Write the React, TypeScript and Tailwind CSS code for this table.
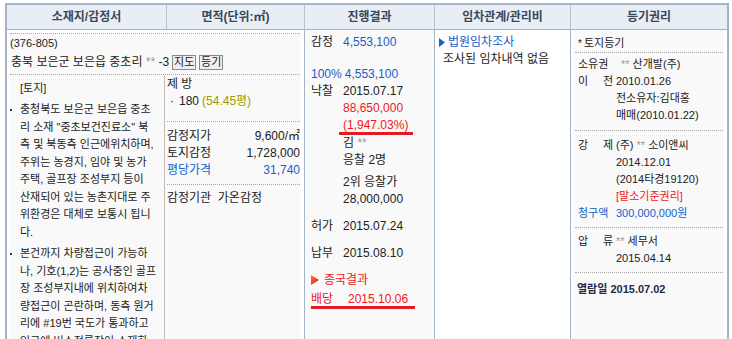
const font = "font-['Liberation_Sans','Noto_Sans_CJK_KR',sans-serif]";
const narrow = "font-['Liberation_Sans_Narrow','Liberation_Sans','Noto_Sans_CJK_KR',sans-serif]";

const BLUE = "text-[#1560c9]";
const RED = "text-[#f01818]";

function Stars() {
  return <span className="text-[#9a9a9a]">**</span>;
}

function BlueArrow() {
  return (
    <svg width="6" height="9" viewBox="0 0 6 9" className="shrink-0">
      <path d="M0 0 L6 4.5 L0 9 Z" fill="#1660c8" />
    </svg>
  );
}

function RedArrow() {
  return (
    <svg width="8" height="10" viewBox="0 0 8 10" className="shrink-0">
      <defs>
        <linearGradient id="redArrow" x1="0" y1="0" x2="1" y2="1">
          <stop offset="0" stopColor="#ff7a3c" />
          <stop offset="1" stopColor="#d4160c" />
        </linearGradient>
      </defs>
      <path d="M0 0 L8 5 L0 10 Z" fill="url(#redArrow)" />
    </svg>
  );
}

function SmallButton({ label }: { label: string }) {
  return (
    <span className="inline-flex h-[15px] w-[24px] items-center justify-center border border-[#8a8a8a] bg-[#efefef] text-[11px] leading-none text-[#222]">
      {label}
    </span>
  );
}

function Bullet({ lines }: { lines: string[] }) {
  return (
    <div className="flex">
      <div className="w-[10px] shrink-0 pt-[8px]">
        <div className="h-[2px] w-[2px] bg-[#333]" />
      </div>
      <div>
        {lines.map((line) => (
          <div key={line} className="whitespace-nowrap">
            {line}
          </div>
        ))}
      </div>
    </div>
  );
}

function Row3({ label, children, className = "" }: { label?: string; children: React.ReactNode; className?: string }) {
  return (
    <div className={`flex whitespace-nowrap ${className}`}>
      <span className="w-[32px] shrink-0">{label}</span>
      <span>{children}</span>
    </div>
  );
}

function Row5({ label, children }: { label?: React.ReactNode; children: React.ReactNode }) {
  return (
    <div className="flex whitespace-nowrap">
      <span className="w-[38px] shrink-0">{label}</span>
      <span>{children}</span>
    </div>
  );
}

function Spread({ a, b }: { a: string; b: string }) {
  return (
    <span className="flex w-[35px] justify-between">
      <span>{a}</span>
      <span>{b}</span>
    </span>
  );
}

export default function App() {
  return (
    <div className={`h-[339px] w-[732px] overflow-hidden bg-white pl-[5px] pt-[3px] text-[12px] text-[#222] ${font}`}>
      <div className="flex h-[340px] w-[724px] flex-col border-x-2 border-t-2 border-[#a5b4c6]">
        <div className="flex h-[25px] shrink-0 border-b border-[#a5b4c6] bg-[#e8eef5] text-[12px] font-bold text-[#3b4759]">
          <div className="flex w-[159px] items-center justify-center">소재지/감정서</div>
          <div className="flex w-[138px] items-center justify-center border-l border-[#b5c3d3]">면적(단위:㎡)</div>
          <div className="flex w-[130px] items-center justify-center border-l border-[#b5c3d3]">진행결과</div>
          <div className="flex w-[136px] items-center justify-center border-l border-[#b5c3d3]">임차관계/관리비</div>
          <div className="flex w-[157px] items-center justify-center border-l border-[#b5c3d3]">등기권리</div>
        </div>

        <div className="flex flex-1 leading-[17px]">
          {/* 소재지 + 면적 */}
          <div className="w-[297px] pl-[3px] pr-[4px] pt-[3px]">
            <div className="h-full border-t border-dotted border-[#a8a8a8] bg-[#f9f9f9]">
              <div className="border-b border-dotted border-[#a8a8a8] pb-[3px] pt-[1px]">
                <div className="text-[11px]">(376-805)</div>
                <div className="mt-[2px] flex items-center gap-[3px] whitespace-nowrap pl-[1px]">
                  <span>
                    충북 보은군 보은읍 중초리 <Stars /> -3
                  </span>
                  <SmallButton label="지도" />
                  <SmallButton label="등기" />
                </div>
              </div>
              <div className="flex h-full">
                <div className="w-[155px] shrink-0 border-r border-[#cbbcb4] pt-[5px] text-[11px] leading-[17.5px]">
                  <div className="pl-[10px]">[토지]</div>
                  <div className="mt-[3.5px]">
                    <Bullet
                      lines={[
                        "충청북도 보은군 보은읍 중초",
                        "리 소재 \"중초보건진료소\" 북",
                        "측 및 북동측 인근에위치하며,",
                        "주위는 농경지, 임야 및 농가",
                        "주택, 골프장 조성부지 등이",
                        "산재되어 있는 농촌지대로 주",
                        "위환경은 대체로 보통시 됩니",
                        "다.",
                      ]}
                    />
                  </div>
                  <div className="mt-[4px]">
                    <Bullet
                      lines={[
                        "본건까지 차량접근이 가능하",
                        "나, 기호(1,2)는 공사중인 골프",
                        "장 조성부지내에 위치하여차",
                        "량접근이 곤란하며, 동측 원거",
                        "리에 #19번 국도가 통과하고",
                        "인근에 버스정류장이 소재하",
                      ]}
                    />
                  </div>
                </div>
                <div className="flex-1 pl-[2px]">
                  <div className="border-b border-dotted border-[#a8a8a8] pb-[11.5px] pt-[0.5px]">
                    <div>제 방</div>
                    <div className="flex items-center whitespace-nowrap">
                      <span className="w-[12px] pl-[3px]">·</span>
                      <span>180 </span>
                      <span className="ml-[3px] text-[#a09a00]">(54.45평)</span>
                    </div>
                  </div>
                  <div className="border-b border-dotted border-[#a8a8a8] pb-[5.5px] pt-[5.5px]">
                    <div className="flex justify-between">
                      <span>감정지가</span>
                      <span>9,600/㎡</span>
                    </div>
                    <div className="flex justify-between">
                      <span>토지감정</span>
                      <span>1,728,000</span>
                    </div>
                    <div className={`flex justify-between ${BLUE}`}>
                      <span>평당가격</span>
                      <span>31,740</span>
                    </div>
                  </div>
                  <div className="whitespace-nowrap pt-[5px]">감정기관&nbsp;&nbsp;가온감정</div>
                </div>
              </div>
            </div>
          </div>

          {/* 진행결과 */}
          <div className="w-[130px] border-l border-[#a5b4c6] bg-[#f9f9f9] pl-[6px] pt-[3.5px]">
            <Row3 label="감정">
              <span className={BLUE}>4,553,100</span>
            </Row3>
            <div className={`mt-[15px] flex gap-[3px] whitespace-nowrap ${BLUE}`}>
              <span>100%</span>
              <span>4,553,100</span>
            </div>
            <Row3 label="낙찰">2015.07.17</Row3>
            <Row3 className={RED}>88,650,000</Row3>
            <div className="pl-[28px]">
              <span className={`inline-block w-[74px] border-b-[3px] border-[#e31b23] pl-[4px] leading-[14px] ${RED}`}>
                (1,947.03%)
              </span>
            </div>
            <Row3>
              김 <Stars />
            </Row3>
            <Row3>응찰 2명</Row3>
            <Row3 className="mt-[5px]">2위 응찰가</Row3>
            <Row3>28,000,000</Row3>
            <Row3 label="허가" className="mt-[10px]">
              2015.07.24
            </Row3>
            <Row3 label="납부" className="mt-[10px]">
              2015.08.10
            </Row3>
            <div className={`mt-[10px] flex items-center gap-[5px] ${RED}`}>
              <RedArrow />
              <span>종국결과</span>
            </div>
            <div className="mt-[2px]">
              <span className={`inline-flex w-[104px] border-b-[3px] border-[#e31b23] leading-[14px] ${RED}`}>
                <span className="w-[37px]">배당</span>
                <span>2015.10.06</span>
              </span>
            </div>
          </div>

          {/* 임차관계 */}
          <div className="w-[136px] border-l border-[#a5b4c6] bg-white pl-[4px] pt-[3.5px]">
            <div className={`flex items-center gap-[3px] ${BLUE}`}>
              <BlueArrow />
              <span>법원임차조사</span>
            </div>
            <div className="whitespace-nowrap pl-[4px]">조사된 임차내역 없음</div>
          </div>

          {/* 등기권리 */}
          <div className={`w-[157px] border-l border-[#a5b4c6] bg-white px-[3px] text-[11px] ${narrow}`}>
            <div className="h-full bg-[#f9f9f9] px-[1px]">
              <div className="border-b border-dotted border-[#a8a8a8] pb-[0.5px] pl-[3px] pt-[4.5px]">
                <span className="mr-[2px] text-[10px]">*</span>토지등기
              </div>
              <div className="border-b border-dotted border-[#a8a8a8] pb-[6px] pl-[3px] pt-[3px]">
                <Row5 label="소유권">
                  <span className="pl-[5px]">
                    <Stars /> 산개발(주)
                  </span>
                </Row5>
                <Row5 label={<Spread a="이" b="전" />}>2010.01.26</Row5>
                <Row5>전소유자:김대홍</Row5>
                <Row5>매매(2010.01.22)</Row5>
              </div>
              <div className="border-b border-dotted border-[#a8a8a8] pb-[5px] pl-[3px] pt-[6px]">
                <Row5 label={<Spread a="강" b="제" />}>
                  (주) <Stars /> 소이앤씨
                </Row5>
                <Row5>2014.12.01</Row5>
                <Row5>(2014타경19120)</Row5>
                <Row5>
                  <span className={RED}>[말소기준권리]</span>
                </Row5>
                <div className={`flex whitespace-nowrap ${BLUE}`}>
                  <span className="w-[38px] shrink-0">청구액</span>
                  <span>300,000,000원</span>
                </div>
              </div>
              <div className="border-b border-dotted border-[#a8a8a8] pb-[5px] pl-[3px] pt-[5px]">
                <Row5 label={<Spread a="압" b="류" />}>
                  <Stars /> 세무서
                </Row5>
                <Row5>2015.04.14</Row5>
              </div>
              <div className="whitespace-nowrap pl-[2px] pt-[8px] font-bold text-[#242a4a]">열람일 2015.07.02</div>
            </div>
          </div>
        </div>
      </div>
    </div>
  );
}
